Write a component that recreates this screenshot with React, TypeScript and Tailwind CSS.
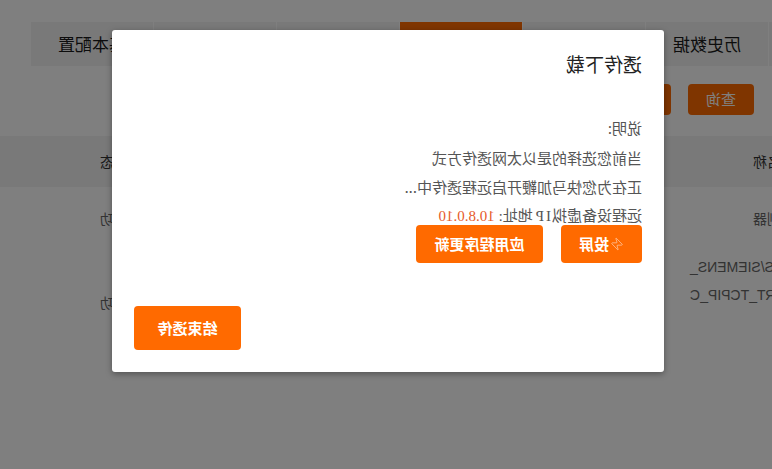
import { Zap } from "lucide-react";

const tabs = ["设备列表", "历史数据", "实时数据", "远程透传", "报警记录", "设备日志", "基本配置"];

export default function App() {
  return (
    <div className="relative h-[469px] w-[772px] overflow-hidden bg-white -scale-x-100 font-['Noto_Sans_CJK_SC',sans-serif]">
      {/* page underneath */}
      <div className="flex flex-col">
        <div className="ml-[-119px] mt-[22px] flex gap-px">
          {tabs.map((t, i) => (
            <div
              key={t}
              className={
                i === 3
                  ? "flex h-[44px] w-[122px] shrink-0 items-center justify-center bg-[#ff6a00] text-[17px] text-white"
                  : "flex h-[44px] w-[122px] shrink-0 items-center justify-center bg-[#f3f3f3] text-[17px] text-[#1a1a1a]"
              }
            >
              {t}
            </div>
          ))}
        </div>

        <div className="mt-[18px] flex h-[31px] gap-[17px] pl-[18px]">
          <button className="w-[66px] rounded-[4px] bg-[#ff6a00] text-[15px] text-white">查询</button>
          <button className="w-[80px] rounded-[4px] bg-[#ff6a00] text-[15px] text-white">重置</button>
        </div>

        <div className="mt-[21px] flex flex-col text-[14px]">
          <div className="flex h-[51px] items-center bg-[#f3f3f3] text-[#333]">
            <div className="ml-[-37px] w-[119px] shrink-0">设备名称</div>
            <div className="w-[526px] shrink-0 text-center">设备型号</div>
            <div className="w-[100px] shrink-0 text-center">状态</div>
          </div>
          <div className="flex h-[62px] items-center text-[#666]">
            <div className="ml-[-37px] w-[119px] shrink-0">主控制器</div>
            <div className="w-[526px] shrink-0 text-center">S7-1200</div>
            <div className="w-[100px] shrink-0 text-center">成功</div>
          </div>
          <div className="flex h-[106px] items-center text-[#666]">
            <div className="ml-[-37px] w-[119px] shrink-0 self-start pt-[4px] text-right font-['Liberation_Sans',sans-serif] leading-[28px]">
              <div className="whitespace-nowrap">VERS/SIEMENS_</div>
              <div className="whitespace-nowrap">_PORT_TCPIP_C</div>
            </div>
            <div className="w-[526px] shrink-0 text-center">S7-200 SMART</div>
            <div className="w-[100px] shrink-0 text-center">成功</div>
          </div>
        </div>
      </div>

      {/* dim overlay */}
      <div className="absolute inset-0 bg-black/50" />

      {/* modal */}
      <div className="absolute left-[108px] top-[30px] flex h-[342px] w-[552px] flex-col rounded-[3px] bg-white px-[22px] pb-[22px] pt-[20px] shadow-[0_2px_6px_rgba(0,0,0,0.35)]">
        <div className="text-[19px] leading-[28px] text-[#222]">透传下载</div>
        <div className="mt-[35px] text-[15px] leading-[29.5px] text-[#555]">
          <div>说明:</div>
          <div>当前您选择的是以太网透传方式</div>
          <div>正在为您快马加鞭开启远程透传中...</div>
          <div className="font-['Liberation_Serif','Noto_Sans_CJK_SC',serif]">
            远程设备虚拟<span className="px-[1px] tracking-[2px]">IP</span>地址: <span className="text-[#e65a2a]">10.8.0.10</span>
          </div>
        </div>
        <div className="-mt-[6px] flex gap-[18px]">
          <button className="flex h-[38px] w-[81px] items-center justify-center gap-[1px] rounded-[4px] bg-[#ff6a00] text-[15px] font-bold text-white">
            <Zap size={14} strokeWidth={1} className="text-[#ffe6d6]" />
            <span>投屏</span>
          </button>
          <button className="h-[38px] w-[127px] rounded-[4px] bg-[#ff6a00] text-[15px] font-bold text-white">
            应用程序更新
          </button>
        </div>
        <div className="mt-auto flex justify-end">
          <button className="h-[44px] w-[107px] rounded-[4px] bg-[#ff6a00] text-[15px] font-bold text-white">
            结束透传
          </button>
        </div>
      </div>
    </div>
  );
}
